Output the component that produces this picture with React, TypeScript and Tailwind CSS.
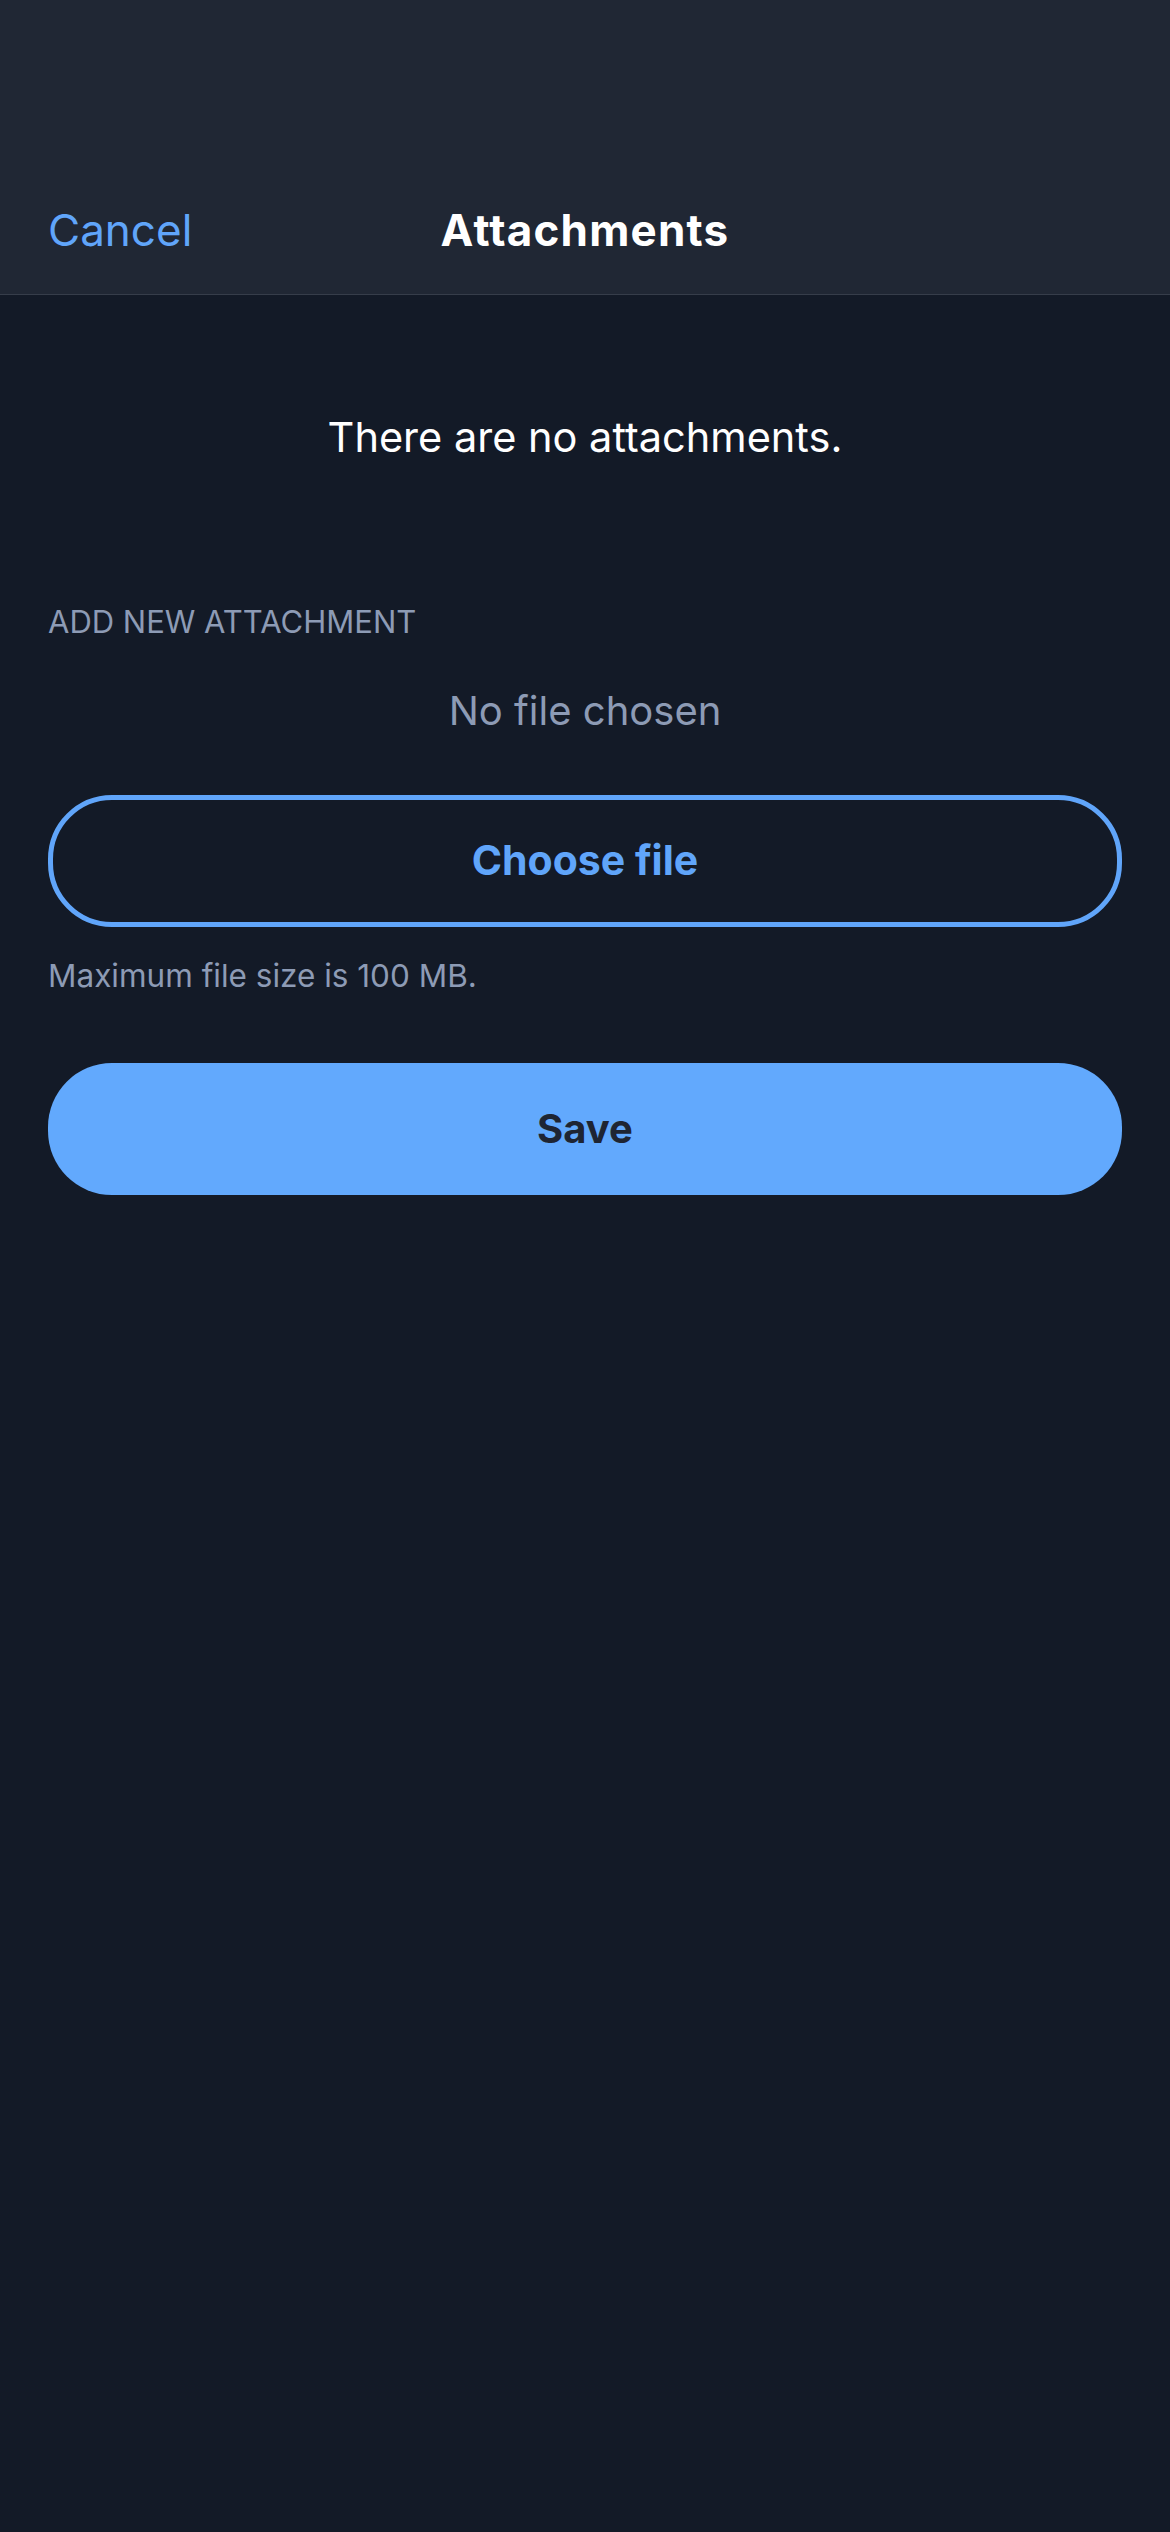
import React from 'react';

const font = { fontFamily: 'Inter, "Noto Sans", sans-serif' };

export default function App() {
  return (
    <div className="min-h-screen w-full bg-[#131a27] text-white" style={font}>
      {/* Nav header */}
      <header className="flex h-[295px] flex-col justify-end border-b border-[#363d4a] bg-[#202734] pb-[14px]">
        <div className="grid h-[100px] grid-cols-[1fr_auto_1fr] items-center px-[48px]">
          <button className="justify-self-start text-[44px] leading-none text-[#60a5fa]">
            Cancel
          </button>
          <h1 className="text-[44px] font-bold leading-none tracking-[1.2px] text-white">
            Attachments
          </h1>
          <div />
        </div>
      </header>

      <main className="flex flex-col px-[48px]">
        <p className="mt-[118px] text-center text-[41.5px] leading-[48px] text-white">
          There are no attachments.
        </p>

        <p className="mt-[141px] text-[31px] uppercase leading-[40px] text-[#8d9bb5]">
          Add new attachment
        </p>

        <p className="mt-[45px] text-center text-[40px] leading-[48px] text-[#8d9bb5]">
          No file chosen
        </p>

        <button className="mt-[60px] flex h-[132px] w-full items-center justify-center rounded-[64px] border-[5px] border-[#60a5fa] text-[41px] font-bold text-[#60a5fa]">
          Choose file
        </button>

        <p className="mt-[30px] text-[31.5px] leading-[38px] text-[#8d9bb5]">
          Maximum file size is 100 MB.
        </p>

        <button className="mt-[68px] flex h-[132px] w-full items-center justify-center rounded-[64px] bg-[#62a9fd] text-[40px] font-bold text-[#1e2533]">
          Save
        </button>
      </main>
    </div>
  );
}
